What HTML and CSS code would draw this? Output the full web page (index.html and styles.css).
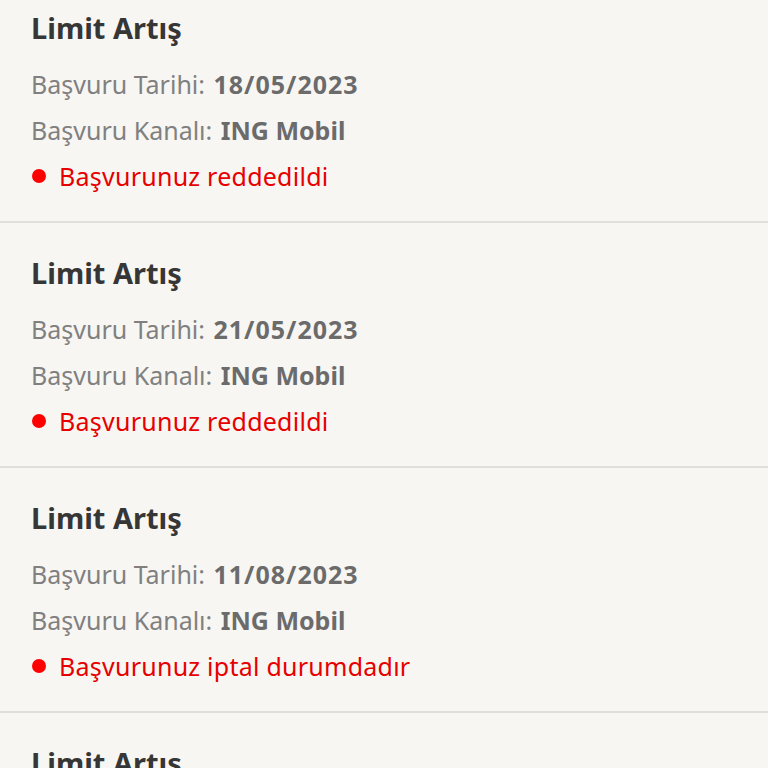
FILE: index.html
```html
<!DOCTYPE html>
<html lang="tr">
<head>
  <meta charset="UTF-8">
  <meta name="viewport" content="width=device-width, initial-scale=1.0">
  <title>Başvurularım</title>
  <link rel="stylesheet" href="styles.css">
</head>
<body>
  <ul class="app-list">
    <li class="app-item">
      <h3 class="app-title">Limit Artış</h3>
      <p class="app-row">Başvuru Tarihi: <b class="date">18/05/2023</b></p>
      <p class="app-row">Başvuru Kanalı: <b>ING Mobil</b></p>
      <p class="app-status"><span class="dot"></span>Başvurunuz reddedildi</p>
    </li>
    <li class="app-item">
      <h3 class="app-title">Limit Artış</h3>
      <p class="app-row">Başvuru Tarihi: <b class="date">21/05/2023</b></p>
      <p class="app-row">Başvuru Kanalı: <b>ING Mobil</b></p>
      <p class="app-status"><span class="dot"></span>Başvurunuz reddedildi</p>
    </li>
    <li class="app-item">
      <h3 class="app-title">Limit Artış</h3>
      <p class="app-row">Başvuru Tarihi: <b class="date">11/08/2023</b></p>
      <p class="app-row">Başvuru Kanalı: <b>ING Mobil</b></p>
      <p class="app-status"><span class="dot"></span>Başvurunuz iptal durumdadır</p>
    </li>
    <li class="app-item">
      <h3 class="app-title">Limit Artış</h3>
      <p class="app-row">Başvuru Tarihi: <b class="date">02/10/2023</b></p>
      <p class="app-row">Başvuru Kanalı: <b>ING Mobil</b></p>
      <p class="app-status"><span class="dot"></span>Başvurunuz reddedildi</p>
    </li>
  </ul>
</body>
</html>
```
FILE: styles.css
```css
html, body {
  margin: 0;
  padding: 0;
  background: #f7f6f3;
  font-family: "Noto Sans", "Open Sans", sans-serif;
  overflow: hidden;
}
.app-list {
  list-style: none;
  margin: -22px 0 0;
  padding: 0;
}
.app-item {
  padding: 32px 32px 22px 31px;
  border-bottom: 2px solid #e0dfdb;
}
.app-title {
  margin: 0 0 15px;
  font-size: 29px;
  line-height: 36px;
  font-weight: 700;
  color: #363636;
}
.app-row, .app-status {
  margin: 0;
  font-size: 25px;
  line-height: 46px;
  color: #808080;
}
.app-row b {
  color: #6b6b6b;
  margin-left: 2px;
}
.app-row .date {
  letter-spacing: 1px;
}
.app-status {
  display: flex;
  align-items: center;
  color: #e60000;
  letter-spacing: 0.25px;
}
.dot {
  width: 14px;
  height: 14px;
  border-radius: 50%;
  background: #ff0000;
  margin: 0 13px 0 1px;
}
```
